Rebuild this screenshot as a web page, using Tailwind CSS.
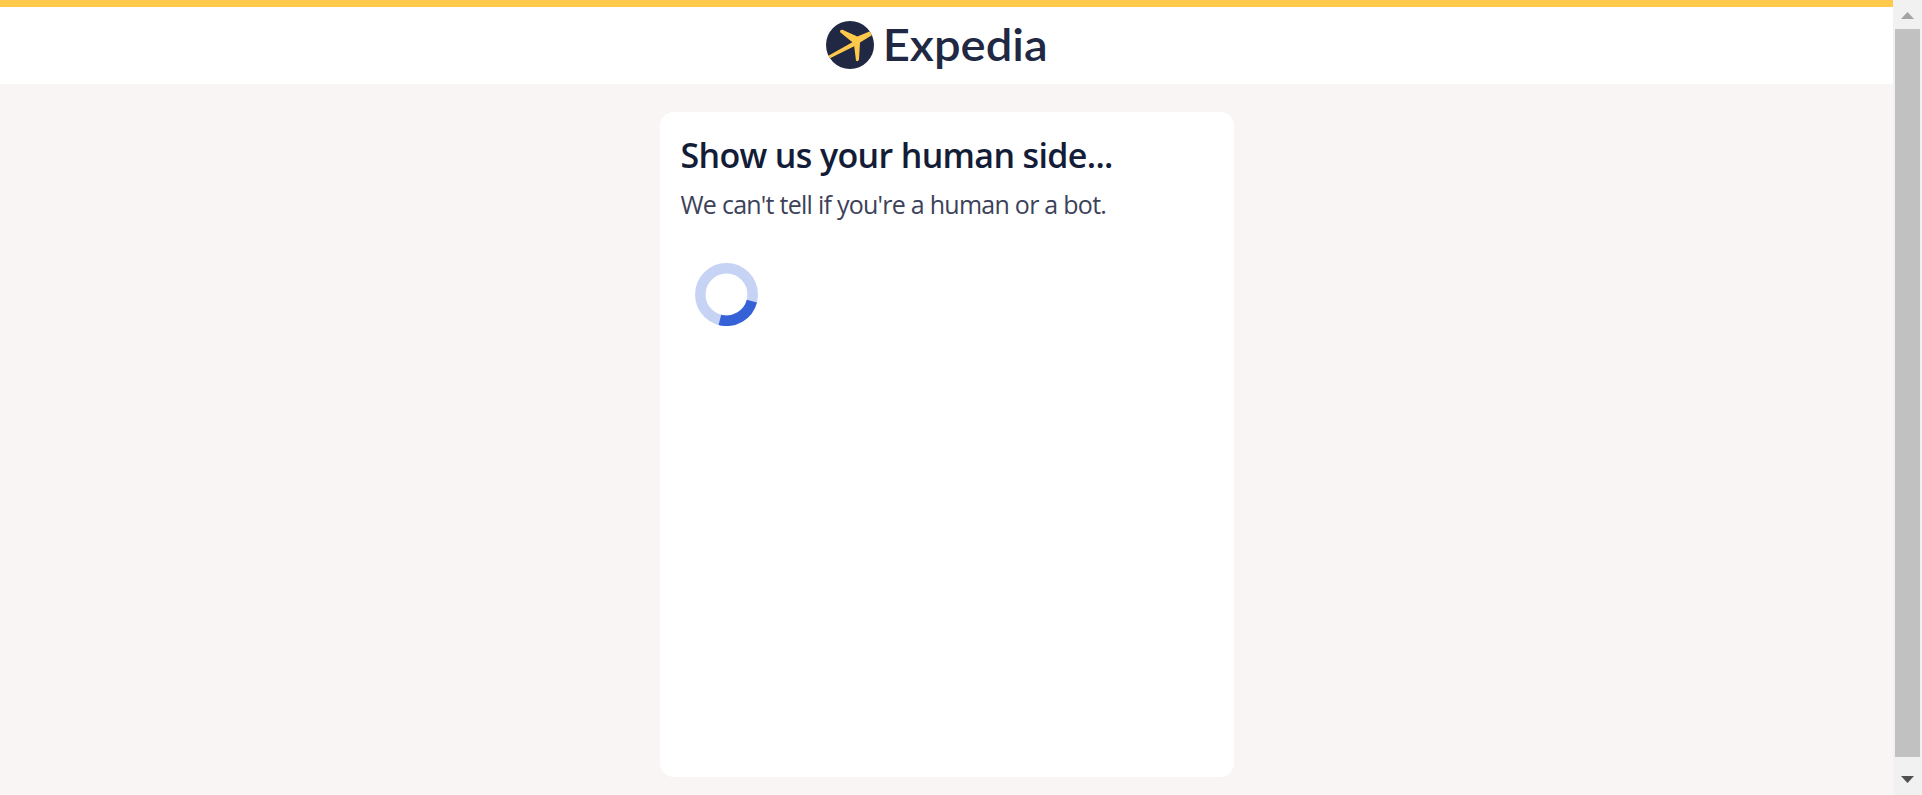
<!DOCTYPE html>
<html lang="en">
<head>
<meta charset="utf-8">
<title>Expedia</title>
<script src="https://cdn.jsdelivr.net/npm/@tailwindcss/browser@4"></script>
</head>
<body class="flex h-screen overflow-hidden bg-[#f9f5f4] font-['Open_Sans','Noto_Sans',sans-serif]">
<div class="flex min-w-0 flex-1 flex-col items-center">
  <header class="flex h-[84px] w-full shrink-0 justify-center border-t-7 border-[#ffc94c] bg-white">
    <svg class="mr-[13px] h-[77px] w-[260px]" viewBox="810 7 260 77" role="img" aria-label="Expedia">
      <clipPath id="disc"><circle cx="850" cy="45" r="24"/></clipPath>
      <circle cx="850" cy="45" r="24" fill="#202843"/>
      <path clip-path="url(#disc)" fill="#ffc94c" d="M827 56.6L852.4 42.2L840.2 32.2Q839.6 29.6 842.4 29.8L857.4 36.6L873 30V34.4L860 42.6L859 59.5Q858 62 856 60.8L854.2 46.2L828 59.2Z"/>
      <text x="882.7" y="61" textLength="165" lengthAdjust="spacingAndGlyphs" fill="#202843" font-family="Lato, sans-serif" font-weight="600" font-size="45">Expedia</text>
    </svg>
  </header>
  <main class="mt-7 flex h-[665px] w-[574px] flex-col items-start rounded-[14px] bg-white px-[21px] pt-[19px]">
    <h1 class="h-12 text-[34px] leading-12 font-semibold tracking-[-0.65px] whitespace-nowrap text-[#141d38]">Show us your human side...</h1>
    <p class="mt-[5px] h-10 text-[25px] leading-10 tracking-[-0.74px] whitespace-nowrap text-[#3b4259]">We can't tell if you're a human or a bot.</p>
    <svg class="mt-[38px] ml-[13px] size-[64px]" viewBox="694 262 64 64" fill="none" stroke-width="10.5">
      <circle cx="726.5" cy="294.5" r="26.2" stroke="#c7d3f5"/>
      <path stroke="#3662d8" d="M751.9 301.1A26.2 26.2 0 0 1 719.9 319.9"/>
    </svg>
  </main>
</div>
<aside class="flex w-[29px] shrink-0 flex-col items-center bg-[#f1f1f1]">
  <svg class="h-[29px] w-[29px] shrink-0" viewBox="0 0 29 29"><path fill="#a3a3a3" d="M8 19L14.5 12L21 19Z"/></svg>
  <div class="h-[728px] w-[25px] shrink-0 bg-[#c1c1c1]"></div>
  <svg class="h-[38px] w-[29px] shrink-0" viewBox="0 0 29 38"><path fill="#505050" d="M8 19H21L14.5 26Z"/></svg>
</aside>
</body>
</html>
